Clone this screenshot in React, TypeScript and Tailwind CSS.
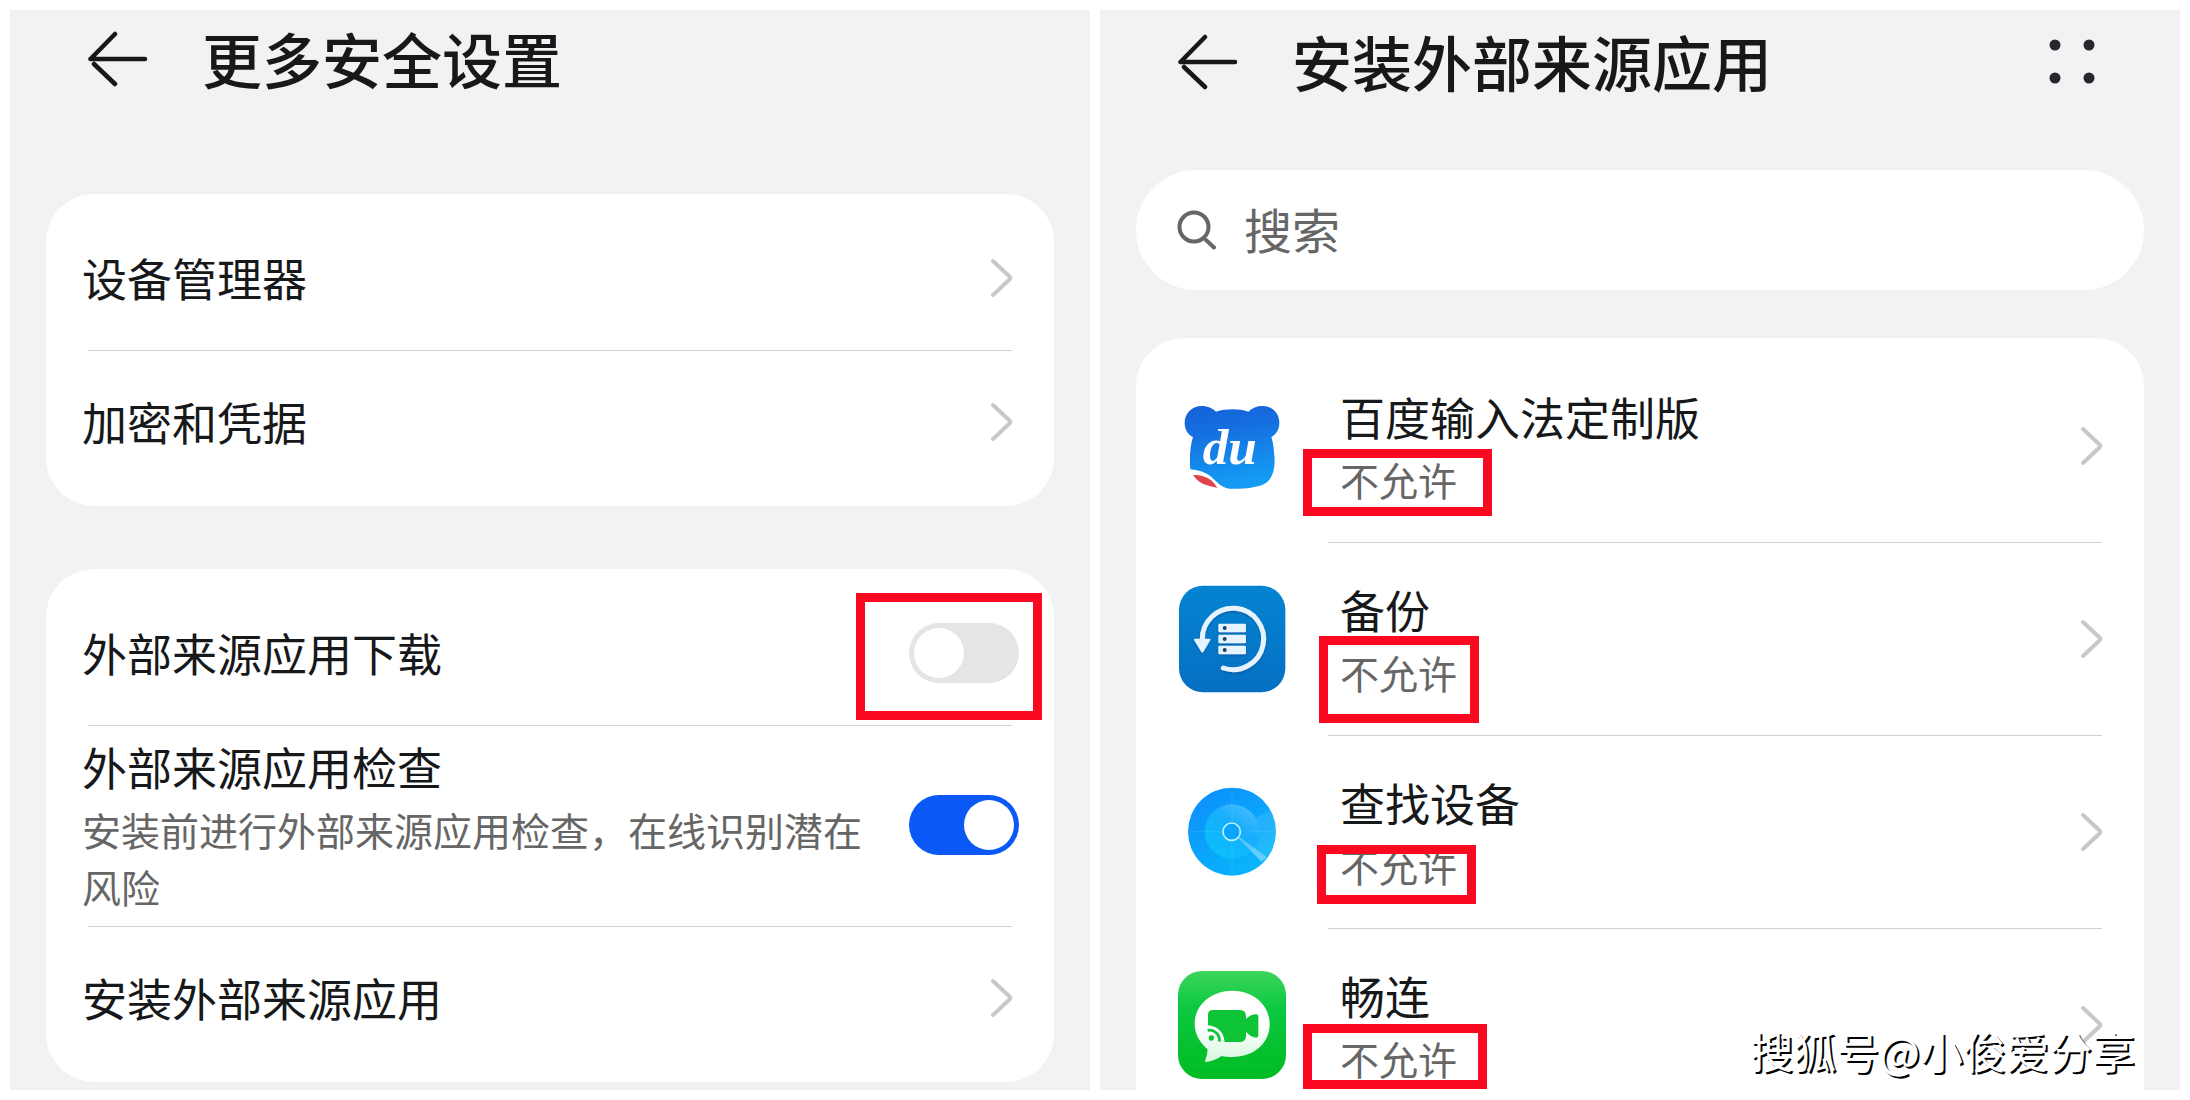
import { useState } from 'react';
import type { ReactNode } from 'react';

const APPS = [
  { name: '百度输入法定制版', status: '不允许', icon: BaiduIcon, mark: '-left-[37px] -top-0.5 w-[189px] h-[67px]' },
  { name: '备份', status: '不允许', icon: BackupIcon, mark: '-left-[21px] -top-2 w-[160px] h-[87px]' },
  { name: '查找设备', status: '不允许', icon: FindDeviceIcon, mark: '-left-[23px] top-2 w-[159px] h-[59px]' },
  { name: '畅连', status: '不允许', icon: MeetimeIcon, mark: '-left-[37px] -top-1.5 w-[184px] h-[65px]' },
];

function BackArrow() {
  return (
    <svg viewBox="0 0 60 56" className="w-[60px] h-14" fill="none" stroke="#17181a" strokeWidth="4.5" strokeLinecap="round">
      <path d="M2.5 28H57M2.5 28L27 3M6 33L27 53" strokeLinejoin="round" />
    </svg>
  );
}

function Chevron() {
  return (
    <svg viewBox="0 0 28 40" className="w-7 h-10 shrink-0" fill="none" stroke="#c8c8c8" strokeWidth="4" strokeLinecap="round" strokeLinejoin="round">
      <path d="M3 3L19.5 18.5Q21 20 19.5 21.5L3 37" />
    </svg>
  );
}

function BaiduIcon() {
  return (
    <svg viewBox="54 36 324 324" className="w-[108px] h-[108px] shrink-0">
      <defs>
        <linearGradient id="bear" x1="0" y1="0" x2="0.2" y2="1">
          <stop offset="0" stopColor="#1660d8" />
          <stop offset="0.35" stopColor="#156fdf" />
          <stop offset="1" stopColor="#149cf5" />
        </linearGradient>
      </defs>
      <path
        fill="url(#bear)"
        d="M125 78C145 78 158 86 168 95C198 86 236 85 265 95C276 84 290 78 308 78C337 78 358 100 358 128C358 148 348 163 334 171C339 186 341 201 343 225C347 270 337 299 311 313C286 325 240 328 207 326C184 322 170 306 155 292C140 278 119 271 91 268C88 235 90 200 99 171C83 163 74 148 74 128C74 99 97 78 125 78Z"
      />
      <path fill="#e0434c" d="M100 285C125 285 154 292 172 323C140 318 112 309 100 285Z" />
      <text x="128" y="251" fontFamily="'Liberation Serif', serif" fontSize="154" fontWeight="700" fontStyle="italic" fill="#fff">
        du
      </text>
    </svg>
  );
}

function BackupIcon() {
  return (
    <svg viewBox="54 46 324 324" className="w-[108px] h-[108px] shrink-0">
      <defs>
        <linearGradient id="backup" x1="0" y1="0" x2="0" y2="1">
          <stop offset="0" stopColor="#0484d2" />
          <stop offset="1" stopColor="#066fc2" />
        </linearGradient>
        <filter id="backup-shadow" x="-20%" y="-20%" width="140%" height="140%">
          <feDropShadow dx="0" dy="4" stdDeviation="3" floodColor="#034a8c" floodOpacity="0.6" />
        </filter>
      </defs>
      <rect x="57" y="48" width="319" height="320" rx="72" fill="url(#backup)" />
      <g filter="url(#backup-shadow)">
        <path d="M127 210A92 92 0 1 1 190 295" fill="none" stroke="#e4f3fd" strokeWidth="15" strokeLinecap="round" />
        <path d="M103 207H151Q152 209 151 211L130 247Q127 250 124 247L102 211Z" fill="#e4f3fd" />
        {[162, 195, 228].map((y) => (
          <g key={y}>
            <rect x="175" y={y} width="83" height="26" rx="4" fill="#e4f3fd" />
            <circle cx="194" cy={y + 13} r="6" fill="#17446f" />
          </g>
        ))}
      </g>
    </svg>
  );
}

function FindDeviceIcon() {
  return (
    <svg viewBox="54 24 324 324" className="w-[108px] h-[108px] shrink-0">
      <defs>
        <linearGradient id="radar" x1="0.1" y1="0.1" x2="0.75" y2="1">
          <stop offset="0" stopColor="#0c90fc" />
          <stop offset="1" stopColor="#08b8fb" />
        </linearGradient>
        <linearGradient id="radar-inner" x1="0.9" y1="0.1" x2="0.3" y2="1">
          <stop offset="0" stopColor="#45bafd" />
          <stop offset="0.4" stopColor="#17aefc" />
          <stop offset="1" stopColor="#08c0fb" />
        </linearGradient>
      </defs>
      <circle cx="216" cy="185" r="132" fill="url(#radar)" />
      <path d="M216 185L306 276A132 132 0 0 0 348 185A132 132 0 0 0 330 120Z" fill="#fff" opacity="0.1" />
      <circle cx="216" cy="185" r="82" fill="url(#radar-inner)" />
      <path d="M216 185L304 275L320 262Z" fill="#fff" opacity="0.3" />
      <path d="M216 54V316M85 185H347" stroke="#7ccffd" strokeWidth="1.5" opacity="0.4" />
      <circle cx="215" cy="185" r="26" fill="#0aa5fb" stroke="#b9f0ff" strokeWidth="5" />
    </svg>
  );
}

function MeetimeIcon() {
  return (
    <svg viewBox="54 603 324 324" className="w-[108px] h-[108px] shrink-0">
      <defs>
        <linearGradient id="meetime" x1="0" y1="0" x2="0" y2="1">
          <stop offset="0" stopColor="#3cd65c" />
          <stop offset="0.35" stopColor="#0cc840" />
          <stop offset="1" stopColor="#00bc22" />
        </linearGradient>
        <linearGradient id="bubble" x1="0" y1="0" x2="0" y2="1">
          <stop offset="0.5" stopColor="#fff" />
          <stop offset="1" stopColor="#d6f6dc" />
        </linearGradient>
      </defs>
      <rect x="54" y="603" width="324" height="324" rx="72" fill="url(#meetime)" />
      <path
        fill="url(#bubble)"
        d="M217 662C281 662 329 705 329 762C329 820 281 861 217 861C205 861 195 860 185 858C171 867 154 875 138 876C134 876 134 873 136 869C141 857 143 847 142 837C119 818 104 791 104 762C104 705 153 662 217 662Z"
      />
      <path
        fill="#0cc435"
        d="M158 720H240Q257 720 258 738V746L273 736Q283 731 291 733Q295 735 295 740V796Q295 802 289 803Q280 802 271 797L258 786V800Q256 815 240 816H194Q190 772 144 766V735Q144 720 158 720Z"
      />
      <circle cx="154" cy="804" r="8" fill="#0cc435" />
      <path d="M143 781A30 30 0 0 1 178 815" fill="none" stroke="#0cc435" strokeWidth="8" />
    </svg>
  );
}

function Highlight({ className }: { className: string }) {
  return <span className={`absolute border-[9px] border-[#fa0a20] pointer-events-none ${className}`} />;
}

function LinkRow({ label }: { label: string }) {
  return (
    <a href="#" className="flex items-center justify-between h-[143px] px-9 pb-0.5">
      <span className="text-[45px] leading-[60px]">{label}</span>
      <Chevron />
    </a>
  );
}

function Switch({ id, defaultOn = false }: { id: string; defaultOn?: boolean }) {
  const [on, setOn] = useState(defaultOn);
  return (
    <input
      id={id}
      type="checkbox"
      role="switch"
      checked={on}
      onChange={() => setOn(!on)}
      className="block appearance-none w-[110px] h-[60px] p-[5px] rounded-full bg-[#e5e5e5] checked:bg-[#0a59f7] before:block before:w-[50px] before:h-[50px] before:rounded-full before:bg-white checked:before:ml-[50px]"
    />
  );
}

function Divider() {
  return <hr className="mx-[42px] border-0 h-px bg-[#cfd0d1]" />;
}

function Card({ children }: { children: ReactNode }) {
  return <div className="bg-white rounded-[48px] pt-[13px] pb-3">{children}</div>;
}

function SecurityPanel() {
  return (
    <section className="bg-[#f1f2f4] px-9 overflow-hidden">
      <header className="flex items-center h-[98px] pl-[42px] gap-[54px]">
        <button aria-label="返回"><BackArrow /></button>
        <h1 className="pb-0.5 text-[60px] leading-[80px] font-medium">更多安全设置</h1>
      </header>

      <div className="flex flex-col gap-[63px] mt-[86px]">
        <Card>
          <LinkRow label="设备管理器" />
          <Divider />
          <LinkRow label="加密和凭据" />
        </Card>

        <Card>
          <div className="flex items-center justify-between h-[143px] pl-9 pr-[35px] pb-0.5">
            <label htmlFor="download" className="text-[45px] leading-[60px]">外部来源应用下载</label>
            <div className="relative">
              <Switch id="download" />
              <Highlight className="-left-[53px] -top-[30px] w-[186px] h-[127px]" />
            </div>
          </div>
          <Divider />
          <div className="flex items-center gap-9 min-h-[200px] pl-9 pr-[35px] pb-0.5">
            <label htmlFor="check" className="flex-1 pt-0.5">
              <span className="block text-[45px] leading-[60px]">外部来源应用检查</span>
              <span className="block mt-1 text-[39px] leading-[57px] text-[#666]">
                安装前进行外部来源应用检查，在线识别潜在风险
              </span>
            </label>
            <Switch id="check" defaultOn />
          </div>
          <Divider />
          <LinkRow label="安装外部来源应用" />
        </Card>
      </div>
    </section>
  );
}

function InstallPanel() {
  return (
    <section className="flex flex-col bg-[#f1f2f4] px-9 overflow-hidden">
      <header className="flex items-center shrink-0 h-[104px] pl-[42px] pr-12 gap-[54px]">
        <button aria-label="返回"><BackArrow /></button>
        <h1 className="flex-1 pb-0.5 text-[60px] leading-[80px] font-medium">安装外部来源应用</h1>
        <button aria-label="更多">
          <svg viewBox="0 0 48 48" className="w-12 h-12" fill="#26272a">
            <circle cx="7" cy="7" r="5.5" />
            <circle cx="41" cy="7" r="5.5" />
            <circle cx="7" cy="40" r="5.5" />
            <circle cx="41" cy="40" r="5.5" />
          </svg>
        </button>
      </header>

      <label className="flex items-center shrink-0 gap-7 mt-14 h-[120px] px-10 rounded-full bg-white">
        <svg viewBox="0 0 40 40" className="w-10 h-10 shrink-0" fill="none" stroke="#666" strokeWidth="4">
          <circle cx="18" cy="17" r="14.5" />
          <path d="M30 30L38 37.5" strokeLinecap="round" />
        </svg>
        <input
          type="search"
          aria-label="搜索"
          placeholder="搜索"
          className="flex-1 min-w-0 pb-1 text-[48px] leading-[64px] bg-transparent outline-none placeholder:text-[#666]"
        />
      </label>

      {/* the list keeps scrolling past the bottom edge */}
      <ul className="shrink-0 grow mt-12 pt-3 bg-white rounded-t-[48px]">
        {APPS.map((app, i) => {
          const Icon = app.icon;
          return (
            <li key={app.name}>
              {i > 0 && <hr className="ml-48 mr-[42px] border-0 h-px bg-[#cfd0d1]" />}
              <a href="#" className="flex items-center h-48 pl-[42px] pr-9">
                <Icon />
                <div className="flex-1 pl-[54px] pt-0.5">
                  <p className="text-[45px] leading-[60px]">{app.name}</p>
                  <p className="relative mt-1 text-[39px] leading-[57px] text-[#666]">
                    {app.status}
                    <Highlight className={app.mark} />
                  </p>
                </div>
                <Chevron />
              </a>
            </li>
          );
        })}
      </ul>
    </section>
  );
}

export default function App() {
  return (
    <main
      lang="zh-CN"
      className="relative grid grid-cols-2 gap-[10px] h-screen p-[10px] overflow-hidden bg-white text-[#17181a] font-['Noto_Sans_CJK_SC',sans-serif]"
    >
      <SecurityPanel />
      <InstallPanel />
      <p className="absolute right-[55px] bottom-5 text-[43px] leading-[60px] text-white [text-shadow:2px_2px_0_#000]">
        搜狐号@小俊爱分享
      </p>
    </main>
  );
}
